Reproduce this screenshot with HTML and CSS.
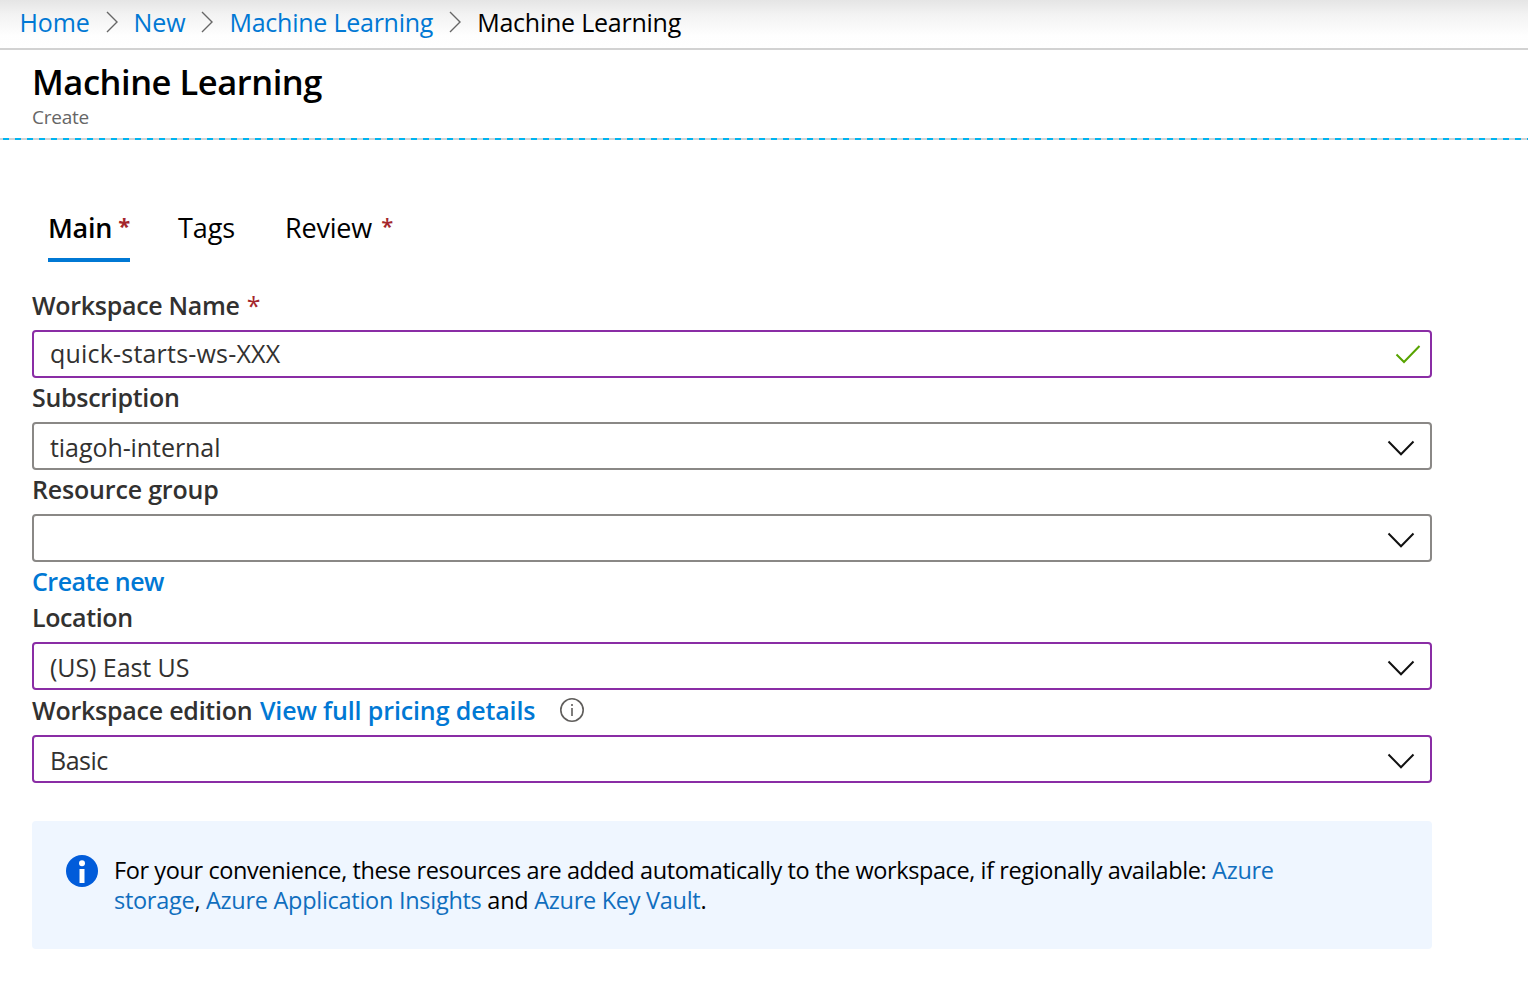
FILE: index.html
```html
<!DOCTYPE html>
<html lang="en">
<head>
<meta charset="utf-8">
<title>Machine Learning - Create</title>
<link rel="stylesheet" href="styles.css">
</head>
<body>
<nav class="crumbs">
  <a class="crumb crumb-home">Home</a>
  <svg class="sep" viewBox="0 0 12 22"><path d="M1 1l10 10L1 21"/></svg>
  <a class="crumb">New</a>
  <svg class="sep" viewBox="0 0 12 22"><path d="M1 1l10 10L1 21"/></svg>
  <a class="crumb long">Machine Learning</a>
  <svg class="sep" viewBox="0 0 12 22"><path d="M1 1l10 10L1 21"/></svg>
  <span class="crumb long current">Machine Learning</span>
</nav>
<header class="header">
  <h1 class="title">Machine Learning</h1>
  <p class="subtitle">Create</p>
</header>
<main class="main">
  <div class="tabs">
    <div class="tab active"><span class="tab-text">Main</span><span class="star">*</span></div>
    <div class="tab"><span>Tags</span></div>
    <div class="tab review"><span class="tab-text">Review</span><span class="star">*</span></div>
  </div>
  <form class="form">
    <div class="label">Workspace Name<span class="star">*</span></div>
    <div class="field text edited"><span class="name">quick-starts-ws-XXX</span>
      <svg class="check" viewBox="0 0 26 20"><path d="M1.5 10.5l7.5 7.5L24.500 2"/></svg>
    </div>
    <div class="label">Subscription</div>
    <div class="field"><span>tiagoh-internal</span>
      <svg class="chevron" viewBox="0 0 28 16"><path d="M1.500 1.500L14 14.200 26.500 1.500"/></svg>
    </div>
    <div class="label group">Resource group</div>
    <div class="field"><span></span>
      <svg class="chevron" viewBox="0 0 28 16"><path d="M1.500 1.500L14 14.200 26.500 1.500"/></svg>
    </div>
    <div class="create"><a class="link">Create new</a></div>
    <div class="label location">Location</div>
    <div class="field edited"><span>(US) East US</span>
      <svg class="chevron" viewBox="0 0 28 16"><path d="M1.500 1.500L14 14.200 26.500 1.500"/></svg>
    </div>
    <div class="label edition"><span>Workspace edition</span><a class="link pricing">View full pricing details</a>
      <svg class="hint" viewBox="0 0 24 24"><circle cx="12" cy="12" r="11.200"/><path d="M12 10v8M12 6v2"/></svg>
    </div>
    <div class="field edited"><span class="basic">Basic</span>
      <svg class="chevron" viewBox="0 0 28 16"><path d="M1.500 1.500L14 14.200 26.500 1.500"/></svg>
    </div>
  </form>
  <section class="note">
    <svg class="info" viewBox="0 0 32 32"><circle class="disc" cx="16" cy="16" r="16"/><circle class="mark" cx="16" cy="8.200" r="3"/><path class="mark" d="M13.500 14h5v14h-5z"/></svg>
    <p class="note-text"><span class="lead">For your convenience, these resources are added automatically to the workspace, if regionally available:</span> <a>Azure storage</a>, <a>Azure Application Insights</a> and <a>Azure Key Vault</a>.</p>
  </section>
</main>
</body>
</html>
```
FILE: styles.css
```css
* { box-sizing: border-box; }

body {
  margin: 0;
  background: #fff;
  color: #000;
  font-family: "Open Sans", "Noto Sans", sans-serif;
}

svg { flex: none; fill: none; }

/* Breadcrumb bar */
.crumbs {
  display: flex;
  height: 50px;
  padding-left: 19.5px;
  border-bottom: 2px solid #d2d2d2;
  background: linear-gradient(#e5e5e5, #f3f3f3 15px, #fefefe 36px, #fff);
  font-size: 25px;
  line-height: 45px;
  letter-spacing: -0.14px;
  white-space: nowrap;
}
.crumb { color: #0078d4; }
.crumb.long { letter-spacing: -0.24px; }
.crumb.current { color: #000; }
.sep {
  width: 12px;
  height: 22px;
  margin: 11px 16px 0 16px;
  stroke: #666;
  stroke-width: 1.4;
}

/* Blade header */
.header {
  height: 90px;
  padding: 10px 0 0 32px;
  background: repeating-linear-gradient(90deg, #00b4f0 0 6px, #d2d2d2 6px 12px) -9px 88px / calc(100% + 12px) 2px no-repeat;
}
.title {
  margin: 0;
  font-size: 34.5px;
  font-weight: 600;
  line-height: 44px;
  letter-spacing: -0.46px;
}
.subtitle {
  margin: 0;
  color: #666;
  font-size: 19px;
  line-height: 27px;
  letter-spacing: -0.25px;
}

.main { width: 1432px; padding: 64px 0 0 32px; }

/* Tabs */
.tabs { display: flex; gap: 48px; padding-left: 16px; }
.tab {
  display: flex;
  justify-content: space-between;
  height: 58px;
  border-bottom: 4px solid transparent;
  font-size: 27px;
  line-height: 48px;
  letter-spacing: -0.1px;
}
.tab.active {
  width: 82px;
  border-color: #0078d4;
  font-weight: 600;
  letter-spacing: -0.3px;
}
.tab.review { width: 108px; margin-left: 2px; letter-spacing: -0.2px; }
.star { color: #a4262c; }
.tab .star { font-size: 22px; font-weight: 600; line-height: 43px; }
.tab.active .star { font-weight: 700; }

/* Form */
.form { padding-top: 24px; color: #323130; font-size: 25px; }
.label {
  height: 44px;
  font-weight: 600;
  line-height: 38px;
  letter-spacing: -0.3px;
}
.label .star { margin-left: 7px; font-weight: 500; }
.label.group { letter-spacing: -0.18px; }
.label.location { letter-spacing: -0.38px; }
.create {
  height: 36px;
  font-weight: 600;
  line-height: 38px;
  letter-spacing: -0.5px;
}
.link { color: #0078d4; }
.label.edition { display: flex; height: 45px; padding-top: 1px; letter-spacing: -0.24px; }
.pricing { margin-left: 7.5px; letter-spacing: -0.13px; }
.hint { width: 24px; height: 24px; margin: 7px 0 0 24.5px; stroke: #605e5c; stroke-width: 1.6; }
.field {
  display: flex;
  justify-content: space-between;
  height: 48px;
  padding: 0 16px;
  border: 2px solid #8a8886;
  border-radius: 4px;
  line-height: 47px;
  letter-spacing: -0.07px;
}
.field.edited { border-color: #8a2da5; }
.field.text { padding-right: 9px; line-height: 42px; }
.name { letter-spacing: 0.2px; }
.basic { letter-spacing: -0.5px; }
.chevron { width: 28px; height: 16px; margin: 16px -1px 0 0; stroke: #111; stroke-width: 2; }
.check { width: 26px; height: 20px; margin: 12px 0 0; stroke: #57a300; stroke-width: 2; }

/* Information banner */
.note {
  display: flex;
  gap: 16px;
  height: 128px;
  margin-top: 38px;
  padding: 34px;
  border-radius: 4px;
  background: #eff6ff;
}
.info { width: 32px; height: 32px; }
.disc { fill: #015cda; }
.mark { fill: #fff; }
.note-text {
  width: 1200px;
  margin: 0;
  font-size: 23.5px;
  line-height: 30px;
  letter-spacing: -0.28px;
}
.lead { letter-spacing: -0.4px; }
.note-text a { color: #106ebe; }
```
